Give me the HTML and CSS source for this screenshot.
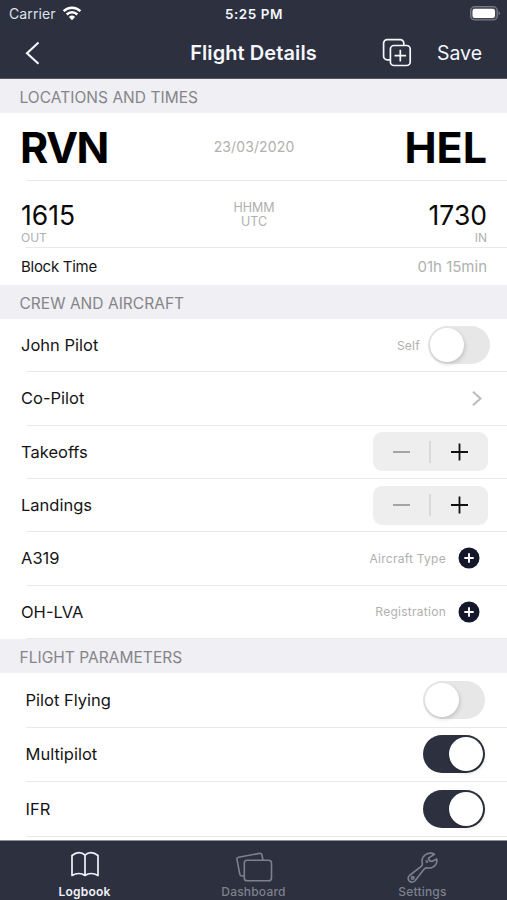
FILE: index.html
```html
<!DOCTYPE html>
<html lang="en">
<head>
<meta charset="utf-8">
<title>Flight Details</title>
<link rel="stylesheet" href="styles.css">
</head>
<body>
<div class="app">
  <header class="top">
    <div class="status">
      <div class="carrier"><span>Carrier</span>
        <svg width="20" height="15" viewBox="0 0 20 15" fill="none" stroke="#fff" stroke-width="2.5"><path d="M1.6 5.2a12 12 0 0 1 16.800 0M4.700 8.500a7.500 7.500 0 0 1 10.600 0"/><path d="M10 14.200l-3.100-3.300a4.400 4.400 0 0 1 6.200 0z" fill="#fff" stroke="none"/></svg>
      </div>
      <div class="clock"><span>5:25 PM</span></div>
      <svg class="battery" width="31" height="15" viewBox="0 0 31 15"><rect x=".7" y=".7" width="26.6" height="13.2" rx="4" fill="#41444f" stroke="#777984" stroke-width="1.3"/><rect x="2.5" y="2.7" width="22.5" height="9.2" rx="2.2" fill="#fff"/><path d="M28.6 5.2q2.8 2.1 0 4.3z" fill="#777984"/></svg>
    </div>
    <nav class="nav">
      <svg class="back" width="16" height="24" viewBox="0 0 16 24" fill="none" stroke="#f5f7fc" stroke-width="2.1"><path d="M13.5 1.5L2 12.2l11.5 10.5"/></svg>
      <h1><span>Flight Details</span></h1>
      <div class="actions">
        <svg width="30" height="30" viewBox="0 0 30 30" fill="none" stroke="#f5f7fc" stroke-width="1.7"><path d="M8.5 21.8H5.2a3.6 3.6 0 0 1-3.6-3.6V5.2a3.6 3.6 0 0 1 3.6-3.6h13a3.6 3.6 0 0 1 3.6 3.6v1.7"/><rect x="8.4" y="7.5" width="19.8" height="20" rx="3.6"/><path d="M18.3 11.8v11.6M12.5 17.6h11.6"/></svg>
        <span>Save</span>
      </div>
    </nav>
  </header>
  <main>
    <h2><span>LOCATIONS AND TIMES</span></h2>
    <div class="row route">
      <span class="airport from">RVN</span><span class="muted">23/03/2020</span><span class="airport">HEL</span>
    </div>
    <div class="row times">
      <div class="time"><span>1615</span><small>OUT</small></div>
      <div class="format"><span>HHMM</span><span>UTC</span></div>
      <div class="time in"><span>1730</span><small>IN</small></div>
    </div>
    <div class="row block"><span class="block-label">Block Time</span><span class="muted">01h 15min</span></div>

    <h2><span>CREW AND AIRCRAFT</span></h2>
    <section class="crew">
      <div class="row self"><span>John Pilot</span><div class="side"><span class="hint">Self</span><i class="switch"></i></div></div>
      <div class="row chev"><span>Co-Pilot</span><svg width="12" height="17" viewBox="0 0 12 17" fill="none" stroke="#bbb" stroke-width="2"><path d="M2 1.7l7.5 6.8L2 15.3"/></svg></div>
      <div class="row stepped"><span>Takeoffs</span>
        <div class="stepper"><svg viewBox="0 0 17 18"><path d="M0 9h17" stroke="#8b8b8b" stroke-width="1.5"/></svg><b></b><svg viewBox="0 0 17 18"><path d="M0 9h17M8.5.5v17" stroke="#111" stroke-width="1.8"/></svg></div></div>
      <div class="row stepped"><span>Landings</span>
        <div class="stepper"><svg viewBox="0 0 17 18"><path d="M0 9h17" stroke="#8b8b8b" stroke-width="1.5"/></svg><b></b><svg viewBox="0 0 17 18"><path d="M0 9h17M8.5.5v17" stroke="#111" stroke-width="1.8"/></svg></div></div>
      <div class="row add"><span>A319</span><div class="side"><span class="hint">Aircraft Type</span><svg width="22" height="22" viewBox="0 0 22 22"><circle cx="11" cy="11" r="10.5" fill="#15182b"/><path d="M6.3 11h9.4M11 6.3v9.4" stroke="#fff" stroke-width="1.9"/></svg></div></div>
      <div class="row add"><span>OH-LVA</span><div class="side"><span class="hint">Registration</span><svg width="22" height="22" viewBox="0 0 22 22"><circle cx="11" cy="11" r="10.5" fill="#15182b"/><path d="M6.3 11h9.4M11 6.3v9.4" stroke="#fff" stroke-width="1.9"/></svg></div></div>
    </section>

    <h2><span>FLIGHT PARAMETERS</span></h2>
    <section class="params">
      <div class="row"><span>Pilot Flying</span><i class="switch"></i></div>
      <div class="row"><span>Multipilot</span><i class="switch on"></i></div>
      <div class="row"><span>IFR</span><i class="switch on"></i></div>
    </section>
  </main>
  <footer class="tabs">
    <div class="tab active">
      <svg width="40" height="34" viewBox="0 0 40 34" fill="none" stroke="currentColor" stroke-width="1.7" stroke-linejoin="round"><path d="M20 5.2Q17.500 2.700 14 2.700T7 5.500v20q3.300-2 6.800-2t6.200 2q2.700-2 6.200-2t6.800 2v-20q-3.500-2.800-7-2.800t-6 2.500zM20 5.200v20.300"/></svg>
      <span>Logbook</span>
    </div>
    <div class="tab">
      <svg width="40" height="34" viewBox="0 0 40 34" fill="none" stroke="currentColor" stroke-width="1.6" stroke-linejoin="round"><path d="M10 25.7L8.2 26q-2 .3-2.4-1.8L3 9.600q-.4-2 1.600-2.400L25.500 3.400q2-.4 2.400 1.600l1.100 5"/><rect x="10.300" y="10.300" width="27.200" height="20.400" rx="2.800"/></svg>
      <span>Dashboard</span>
    </div>
    <div class="tab">
      <svg width="40" height="34" viewBox="0 0 40 34" fill="none" stroke="currentColor" stroke-width="1.6" stroke-linejoin="round"><path d="M31.500 4.300q-5-2.700-9.300.5t-2.800 8.900q.2 1.500-1.200 2.700L6.500 25.500q-2.500 2.500-.4 5.300 2.800 2.600 5.700.2L21 19.200q1.200-1.400 2.800-1.300 5.600.8 8.700-3 2-2.700 1.200-5.900l-4.700 2.500q-3.300-.3-3.600-3.400z"/><circle cx="9.700" cy="27.900" r="1.300"/><path d="M22.500 10.500l2.500 2M22.800 12.700l1.800-2" stroke-width="1.2"/></svg>
      <span>Settings</span>
    </div>
  </footer>
</div>
</body>
</html>
```
FILE: styles.css
```css
* { box-sizing: border-box; }
body { margin: 0; background: #fff; font-family: Inter, "Liberation Sans", sans-serif; color: #151515; }
.app { width: 507px; height: 900px; display: flex; flex-direction: column; overflow: hidden; }
svg { display: block; flex: none; }
span, small { white-space: nowrap; }

.top { height: 79px; background: #2c303f; color: #f5f7fc; border-bottom: 1px solid #555766; }
.status { height: 27px; display: grid; grid-template-columns: 1fr auto 1fr; align-items: center; padding: 0 6px 0 9px; }
.carrier { display: flex; align-items: center; gap: 6px; font-size: 14px; color: #dfe2ea; letter-spacing: .1px; }
.clock { font-size: 13.5px; font-weight: 600; letter-spacing: .55px; margin-right: 2px; }
.battery { justify-self: end; }
.nav { height: 51px; display: grid; grid-template-columns: 1fr auto 1fr; align-items: center; padding: 0 25px; }
h1 { margin: 0; font-size: 20px; font-weight: 600; line-height: 28px; letter-spacing: .08px; }
.actions { display: flex; align-items: center; justify-content: flex-end; gap: 25px; font-size: 19.5px; }

main { height: 761px; }
h2 { margin: 0; height: 34px; display: flex; align-items: center; padding: 3px 20px 0 19.500px; background: #efeff4; color: #858589; font-size: 15.5px; font-weight: 400; letter-spacing: .03px; }
.row { display: flex; align-items: center; justify-content: space-between; padding-left: 21px; font-size: 16.5px;
  background: linear-gradient(#e9e9eb, #e9e9eb) 26px 100% / 100% 1px no-repeat; }
.muted { color: #b0b0b0; }

.route { height: 68px; display: grid; grid-template-columns: 1fr auto 1fr; padding-right: 20px; }
.airport { font-size: 43px; font-weight: 700; color: #000; }
.airport.from { letter-spacing: -1.5px; margin-left: -1px; }
.airport:last-child { text-align: right; }
.route .muted { font-size: 14px; letter-spacing: .12px; padding-bottom: 1px; }
.times { height: 67px; display: grid; grid-template-columns: 1fr auto 1fr; align-items: start; padding-right: 20px; }
.time { display: flex; flex-direction: column; align-items: flex-start; padding-top: 18px; font-size: 26.5px; line-height: 32px; color: #0a0a0a; }
.time small { font-size: 12px; line-height: 14px; color: #b0b0b0; }
.time.in { align-items: flex-end; }
.format { display: flex; flex-direction: column; align-items: center; padding-top: 20px; font-size: 12.5px; line-height: 14px; color: #b0b0b0; }
.block { height: 37px; padding-right: 20px; font-size: 15px; background: none; }
.block-label { letter-spacing: -.28px; }

.crew { height: 320px; display: grid; grid-template-rows: repeat(6, 1fr); }
.crew .row { padding-bottom: 1px; }
.side { display: flex; align-items: center; }
.hint { font-size: 12px; color: #b0b0b0; letter-spacing: .27px; }
.self { padding-right: 17px; }
.self .side { gap: 8px; }
.chev { padding-right: 24px; }
.stepped { padding-right: 19.500px; }
.add { padding-right: 27px; }
.add .side { gap: 12px; }
.stepper { width: 115px; height: 39px; border-radius: 9px; background: #eee; display: flex; align-items: center; justify-content: space-between; padding: 0 20px; }
.stepper svg { width: 17px; height: 18px; }
.stepper b { width: 1.5px; height: 22px; background: #dadada; }

.switch { width: 62px; height: 38px; border-radius: 19px; background: #e7e7e8; padding: 2px; display: flex; }
.switch::after { content: ""; width: 34px; height: 34px; border-radius: 50%; background: #fff; box-shadow: 1px 2px 4px rgba(0, 0, 0, .16); }
.switch.on { background: #2c303f; justify-content: flex-end; }
.params { height: 164px; display: grid; grid-template-rows: repeat(3, 1fr); }
.params .row { padding: 0 22px 1px 25.500px; }

.tabs { height: 60px; display: grid; grid-template-columns: repeat(3, 1fr); background: #2c303f; border-top: 1px solid #8e8f97; }
.tab { display: flex; flex-direction: column; align-items: center; padding-top: 9px; color: #7e818c; font-size: 12px; font-weight: 500; line-height: 15px; letter-spacing: .2px; }
.tab.active { color: #f0f2f8; font-weight: 600; }
```
